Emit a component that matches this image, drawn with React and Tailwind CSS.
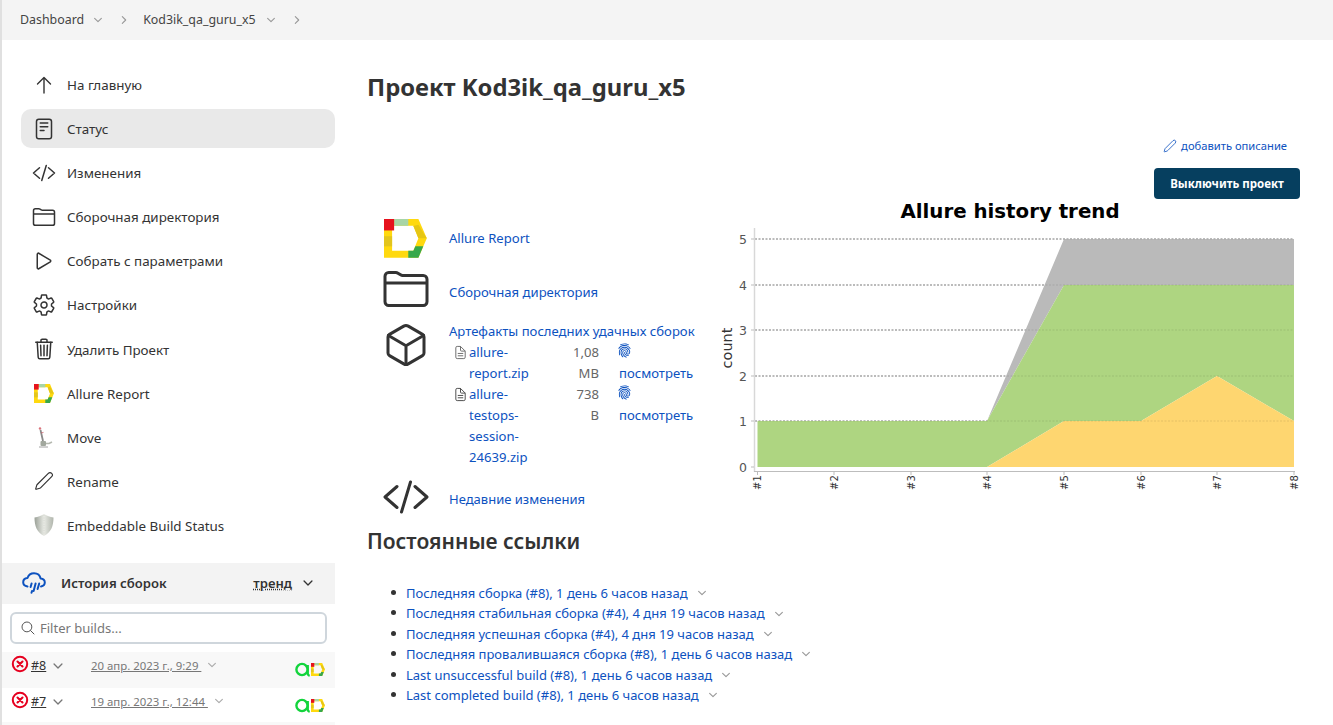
import React from "react";
import {
  IoReaderOutline, IoDocumentTextOutline, IoCodeSlashOutline, IoFolderOutline, IoPlayOutline,
  IoSettingsOutline, IoTrashOutline, IoCubeOutline, IoFingerPrint,
  IoChevronDownOutline, IoChevronForwardOutline, IoSearchOutline,
} from "react-icons/io5";
import { Pen } from "lucide-react";

function AllureLogo({ className }) {
  return (
    <svg viewBox="0 0 42.5 38.5" className={className} preserveAspectRatio="none">
      <path fillRule="evenodd" d="M0 0H34L42.3 19L34 38.3H0Z M8 6.7V31.3H29L34 19L29 6.7Z" fill="#ffd90f" />
      <rect x="0" y="17" width="8" height="10" fill="#e3c51d" />
      <polygon points="34,5.7 42.3,19 34,19 29,7" fill="#e6c614" />
      <polygon points="24,31.3 29,31.3 31,27 38.8,27 34,38.3 24,38.3" fill="#37a84c" />
      <rect x="10" y="0" width="14" height="6.7" fill="#a8d5a6" />
      <rect x="0" y="0" width="10" height="11.3" fill="#e6121d" />
    </svg>
  );
}

function MoveIcon() {
  return (
    <svg viewBox="0 0 24 24" className="w-6 h-6">
      <path d="M8.5 5L11 16" stroke="#8a8a8a" strokeWidth="1.8" />
      <circle cx="8" cy="3.5" r="1.2" fill="#d9737b" />
      <path d="M9 8l2.5-.6" stroke="#c9606a" strokeWidth="0.8" />
      <path d="M10 18.5h7l3-1.5" stroke="#b5b9b0" strokeWidth="1.6" fill="none" />
      <rect x="8.5" y="16" width="5.5" height="5" rx="1" fill="#a2a89e" />
      <path d="M7 22h9" stroke="#8a8a8a" strokeWidth="0.8" />
    </svg>
  );
}

function ShieldIcon() {
  return (
    <svg viewBox="0 0 24 24" className="w-6 h-6">
      <defs>
        <linearGradient id="shieldfill" x1="0" x2="1" y1="0" y2="0">
          <stop offset="0" stopColor="#9aa097" />
          <stop offset="0.5" stopColor="#e8eae4" />
          <stop offset="1" stopColor="#b0b5ac" />
        </linearGradient>
      </defs>
      <path d="M12 1C9 3 6 4 2.5 4.5 2.5 13 5 19.5 12 23c7-3.5 9.5-10 9.5-18.5C18 4 15 3 12 1z" fill="url(#shieldfill)" />
      <path d="M12 2v20" stroke="#cfd2cb" strokeWidth="0.6" strokeDasharray="1 1.5" />
    </svg>
  );
}

function ArrowUpThin() {
  return (
    <svg viewBox="0 0 24 24" className="w-6 h-6" fill="none" stroke="currentColor" strokeWidth="1.4" strokeLinecap="round" strokeLinejoin="round">
      <path d="M12 20V4.5M5.5 11L12 4.5L18.5 11" />
    </svg>
  );
}

function RainCloud() {
  return (
    <svg viewBox="0 0 24 24" className="w-[24px] h-[24px] text-[#0d52bf]" fill="none" stroke="currentColor" strokeWidth="2" strokeLinecap="round" strokeLinejoin="round">
      <path d="M5.5 15.5C3 15 1.2 13.5 1.2 11.2c0-2.4 1.8-4 4.3-4.2C6.5 4 9 2.2 12 2.2c3.5 0 6 2.3 6.6 5.3 2.5.2 4.2 1.7 4.2 4 0 2.2-1.6 3.6-3.8 4" />
      <path d="M9.6 12.5L8.6 16M13.6 12.5L11.6 20M17.2 12.5L15.6 18M10 20l-.5 1.8" />
    </svg>
  );
}

function FailIcon() {
  return (
    <svg viewBox="0 0 18 18" className="w-[18px] h-[18px] shrink-0" fill="none" stroke="#e6001f" strokeLinecap="round">
      <circle cx="9" cy="9" r="7.2" strokeWidth="2" />
      <path d="M6.5 6.5l5 5M11.5 6.5l-5 5" strokeWidth="2.1" />
    </svg>
  );
}

function MiniBadge() {
  return (
    <div className="flex items-center gap-[1px]">
      <svg viewBox="0 0 15 15" className="w-[15px] h-[15px]" fill="none">
        <circle cx="7" cy="7.5" r="5.6" stroke="#12d43c" strokeWidth="2.4" />
        <path d="M12.8 3v8.5c0 1.5.8 2 2 2" stroke="#12d43c" strokeWidth="2.2" />
      </svg>
      <AllureLogo className="w-[14px] h-[13px]" />
    </div>
  );
}

const nav = [
  [<ArrowUpThin />, "На главную"],
  [<IoReaderOutline className="w-6 h-6" />, "Статус", true],
  [<IoCodeSlashOutline className="w-6 h-6" />, "Изменения"],
  [<IoFolderOutline className="w-6 h-6" />, "Сборочная директория"],
  [<IoPlayOutline className="w-6 h-6" />, "Собрать с параметрами"],
  [<IoSettingsOutline className="w-6 h-6" />, "Настройки"],
  [<IoTrashOutline className="w-6 h-6" />, "Удалить Проект"],
  [<AllureLogo className="w-[20px] h-[19px]" />, "Allure Report"],
  [<MoveIcon />, "Move"],
  [<Pen className="w-[20px] h-[20px]" strokeWidth={1.4} />, "Rename"],
  [<ShieldIcon />, "Embeddable Build Status"],
];

const links = [
  "Последняя сборка (#8), 1 день 6 часов назад",
  "Последняя стабильная сборка (#4), 4 дня 19 часов назад",
  "Последняя успешная сборка (#4), 4 дня 19 часов назад",
  "Последняя провалившаяся сборка (#8), 1 день 6 часов назад",
  "Last unsuccessful build (#8), 1 день 6 часов назад",
  "Last completed build (#8), 1 день 6 часов назад",
];

function Chart() {
  const ys = [[5, 239], [4, 285], [3, 330], [2, 376], [1, 421], [0, 467]];
  const xs = [757.5, 834, 911, 987, 1064, 1141, 1217, 1294];
  return (
    <svg viewBox="710 200 590 300" className="w-[590px] h-[300px] shrink-0" style={{ fontFamily: "'DejaVu Sans', sans-serif" }}>
      {ys.slice(0, 5).map(([n, y]) => (
        <line key={n} x1="755" x2="1294" y1={y} y2={y} stroke="#000" strokeOpacity="0.45" strokeWidth="1" strokeDasharray="2 1.5" />
      ))}
      <polygon points="987,421 1064,239 1294,239 1294,285 1064,285" fill="#bababa" />
      <polygon points="757.5,421 987,421 1064,285 1294,285 1294,421 1217,376 1141,421 1064,421 987,467 757.5,467" fill="#aed581" />
      <polygon points="987,467 1064,421 1141,421 1217,376 1294,421 1294,467" fill="#fed670" />
      {ys.slice(0, 5).map(([n, y]) => (
        <line key={n} x1="755" x2="1294" y1={y} y2={y} stroke="#000" strokeOpacity="0.1" strokeWidth="1" strokeDasharray="2 1.5" />
      ))}
      <line x1="754.5" x2="754.5" y1="228" y2="472" stroke="#d8d8d8" strokeWidth="1.5" />
      <line x1="754" x2="1295" y1="471.5" y2="471.5" stroke="#bdbdbd" strokeWidth="1" />
      {ys.map(([n, y]) => (
        <g key={n}>
          <line x1="751" x2="754" y1={y} y2={y} stroke="#bdbdbd" />
          <text x="747" y={y + 4.5} textAnchor="end" fontSize="12.5" fill="#555">{n}</text>
        </g>
      ))}
      {xs.map((x, i) => (
        <g key={x}>
          <line x1={x} x2={x} y1="472" y2="475" stroke="#bdbdbd" />
          <text transform={`translate(${x + 3.5} 490) rotate(-90)`} fontSize="10" fill="#333">#{i + 1}</text>
        </g>
      ))}
      <text transform="translate(732 348) rotate(-90)" textAnchor="middle" fontSize="14.5" fill="#333">count</text>
      <text x="1010" y="218" textAnchor="middle" fontSize="19.8" fontWeight="700" fill="#000">Allure history trend</text>
    </svg>
  );
}

function Artefact({ name, size, iconClass }) {
  return (
    <div className="flex items-start">
      <IoDocumentTextOutline className={`w-[15px] h-[15px] mt-[3px] ml-[4px] mr-[1px] shrink-0 ${iconClass}`} />
      <a className="w-[72px] text-[#0d52bf]">{name}</a>
      <div className="w-[58px] flex justify-end text-[#666]"><span className="w-[30px] text-right">{size}</span></div>
      <a className="ml-[20px] w-[78px] text-[#0d52bf] block">
        <IoFingerPrint className="w-[15px] h-[15px] -ml-[2px] mt-[1px] mb-[5px]" />
        посмотреть
      </a>
    </div>
  );
}

function BuildRow({ num, date, bg, h }) {
  return (
    <div className={`flex ${h} ${bg} pl-[9px] pr-[10px] pt-[3px] text-[#777] text-[11.4px] leading-[21px]`}>
      <FailIcon />
      <a className="ml-[2px] w-[17px] text-[12.5px] underline text-[#333]">{num}</a>
      <IoChevronDownOutline className="w-[14px] h-[14px] ml-[3px] mt-[4px] text-[#777]" />
      <a className="ml-[26px] underline whitespace-pre">{date}</a>
      <IoChevronDownOutline className="w-[12px] h-[12px] ml-[5px] mt-[4px] text-[#aaa]" />
      <div className="ml-auto mt-[7px]"><MiniBadge /></div>
    </div>
  );
}

export default function App() {
  return (
    <div className="h-[725px] overflow-hidden bg-white text-[#333] text-[13.1px]" style={{ fontFamily: "'Noto Sans', sans-serif" }}>
      <header className="h-[40px] bg-[#f4f4f4] flex items-center pl-[20px] text-[12.4px] text-[#444] border-l-2 border-[#e0e0e0]">
        <span className="-ml-[2px]">Dashboard</span>
        <IoChevronDownOutline className="w-[12px] h-[12px] ml-[8px] text-[#999]" />
        <IoChevronForwardOutline className="w-[12px] h-[12px] ml-[14px] text-[#999]" />
        <span className="ml-[13px]">Kod3ik_qa_guru_x5</span>
        <IoChevronDownOutline className="w-[12px] h-[12px] ml-[9px] text-[#999]" />
        <IoChevronForwardOutline className="w-[12px] h-[12px] ml-[14px] text-[#999]" />
      </header>
      <div className="flex">
        <aside className="w-[335px] shrink-0 border-l-2 border-[#e0e0e0] h-[685px]">
          <nav className="pt-[25px] pl-[19px] flex flex-col gap-[5.1px] text-[13.4px]">
            {nav.map(([icon, label, active]) => (
              <div key={label} className={`h-[39px] flex items-center rounded-[10px] pl-[11px] ${active ? "bg-[#e9e9e9]" : ""}`}>
                <span className="w-6 h-6 flex items-center justify-center text-[#333] shrink-0">{icon}</span>
                <span className="ml-[11px] pt-[1px]">{label}</span>
              </div>
            ))}
          </nav>
          <div className="mt-[18px] h-[41px] bg-[#f3f3f3] flex items-center pl-[20px] pr-[20px]">
            <RainCloud />
            <span className="ml-[15px] font-semibold">История сборок</span>
            <span className="ml-auto font-semibold underline decoration-dotted">тренд</span>
            <IoChevronDownOutline className="w-[14px] h-[14px] ml-[9px]" />
          </div>
          <div className="px-[8px] pt-[8px] pb-[8px]">
            <div className="h-[32px] border-2 border-[#cfd6dc] rounded-[6px] flex items-center pl-[8px] text-[#777] text-[13px]">
              <IoSearchOutline className="w-[16px] h-[16px] text-[#555]" />
              <span className="ml-[4px] pt-[1px]">Filter builds...</span>
            </div>
          </div>
          <BuildRow num="#8" date="20 апр. 2023 г., 9:29 " bg="bg-[#f8f8f8]" h="h-[36px]" />
          <BuildRow num="#7" date="19 апр. 2023 г., 12:44 " bg="bg-white" h="h-[34px]" />
          <div className="h-[10px] bg-[#f8f8f8]" />
        </aside>
        <main className="flex-1 pl-[32px] pr-[33px] min-w-0">
          <h1 className="mt-[31px] h-[32px] text-[23.8px] leading-[32px] font-bold">Проект Kod3ik_qa_guru_x5</h1>
          <div className="mt-[33px] h-[20px] flex justify-end items-center pr-[13px] text-[11.2px] text-[#0d52bf]">
            <Pen className="w-[14px] h-[14px] mr-[4px]" strokeWidth={1.4} />
            <span className="pt-[1px]">добавить описание</span>
          </div>
          <div className="mt-[12px] flex justify-end">
            <button className="h-[31px] w-[146px] rounded-[4px] bg-[#063f5f] text-white text-[11.5px] font-bold">Выключить проект</button>
          </div>
          <div className="mt-[1px] h-[320px] flex justify-between">
            <div className="w-[343px] pt-[18px] pl-[17px] text-[#0d52bf]">
              <div className="h-[40px] flex items-center">
                <AllureLogo className="w-[43px] h-[39px] shrink-0 mr-[1px]" />
                <a className="ml-[21px] pt-[1px]">Allure Report</a>
              </div>
              <div className="mt-[10px] h-[42px] flex items-start">
                <IoFolderOutline className="w-[48px] h-[48px] -ml-[2px] -mr-[2px] -mt-[3px] text-[#333] shrink-0" />
                <a className="ml-[21px] mt-[15px]">Сборочная директория</a>
              </div>
              <div className="mt-[11px] flex items-start">
                <IoCubeOutline className="w-[48px] h-[48px] -ml-[2px] -mr-[2px] text-[#333] shrink-0" />
                <div className="ml-[21px] leading-[21px]">
                  <a className="block">Артефакты последних удачных сборок</a>
                  <Artefact name="allure-report.zip" size="1,08 MB" iconClass="text-[#666]" />
                  <Artefact name="allure-testops-session-24639.zip" size="738 B" iconClass="text-[#444]" />
                </div>
              </div>
              <div className="mt-[5px] flex items-center">
                <IoCodeSlashOutline className="w-[48px] h-[48px] -ml-[2px] -mr-[2px] text-[#333] shrink-0" />
                <a className="ml-[21px] mt-[6px] text-[13px]">Недавние изменения</a>
              </div>
            </div>
            <Chart />
          </div>
          <h2 className="mt-[7px] h-[28px] text-[21px] leading-[28px] font-semibold">Постоянные ссылки</h2>
          <ul className="mt-[28px] pl-[39px] list-none text-[13px]">
            {links.map((l) => (
              <li key={l} className="h-[20.4px] leading-[20.4px] flex items-center relative text-[#0d52bf]">
                <span className="absolute -left-[15px] top-[7px] w-[5px] h-[5px] rounded-full bg-[#333]" />
                <a>{l}</a>
                <IoChevronDownOutline className="w-[12px] h-[12px] ml-[8px] text-[#999]" />
              </li>
            ))}
          </ul>
        </main>
      </div>
    </div>
  );
}
